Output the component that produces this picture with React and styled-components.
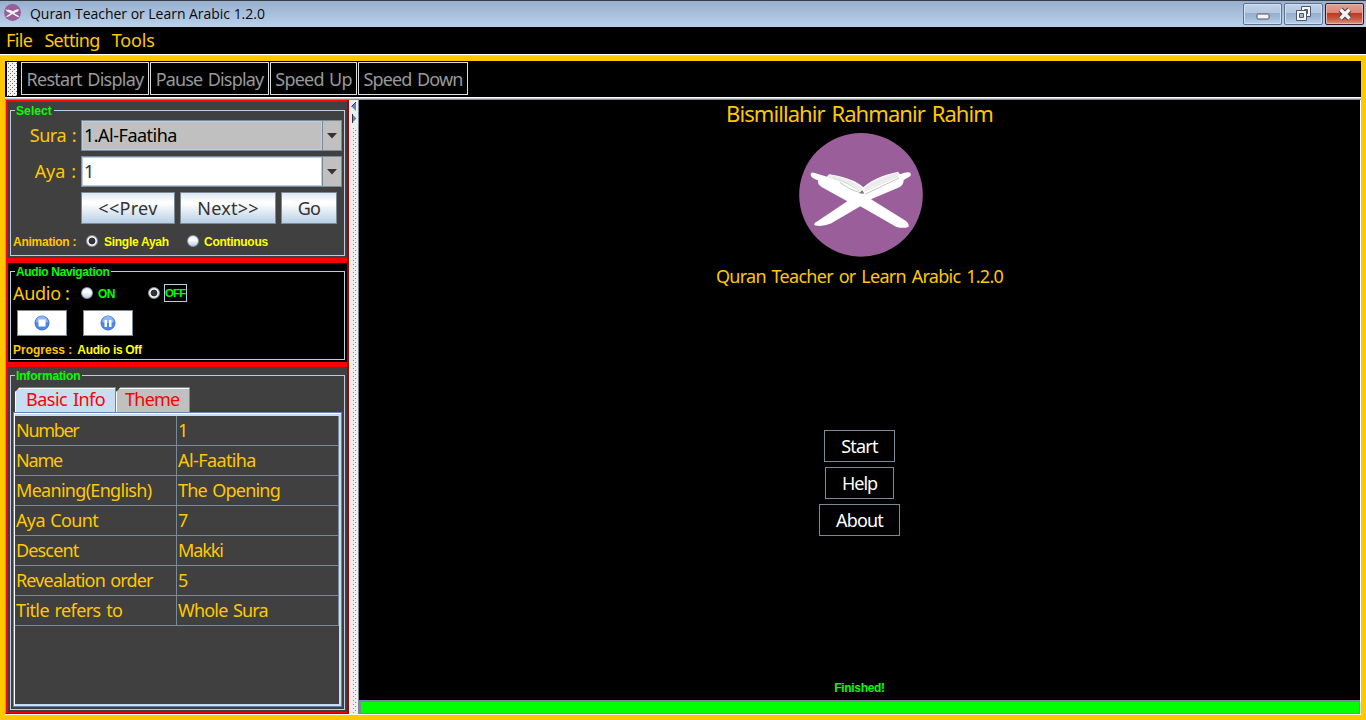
import React from "react";
import styled, { createGlobalStyle, css } from "styled-components";

const GlobalStyle = createGlobalStyle`
  * { box-sizing: border-box; }
  body { margin: 0; background: #000; overflow: hidden; }
  button { margin: 0; padding: 0; cursor: default; }
`;

const ui = css`
  font-family: "Noto Sans", "DejaVu Sans", sans-serif;
  font-size: 18px;
  line-height: 22px;
`;
const small = css`
  font-family: "Liberation Sans", Arial, sans-serif;
  font-size: 12px;
  font-weight: bold;
  line-height: 14px;
`;
const gold = "#ffc800";
const steel = "#7a8a99";
const pale = "#b8cfe5";

const Window = styled.div`
  ${ui}
  width: 1366px;
  height: 720px;
  display: flex;
  flex-direction: column;
  background: #000;
  color: ${gold};
  white-space: nowrap;
`;
const Text = styled.span`
  letter-spacing: ${(p) => p.$ls || 0}px;
  word-spacing: ${(p) => p.$ws || 0}px;
`;

const TitleBar = styled.header`
  height: 27px;
  flex: none;
  display: flex;
  align-items: center;
  padding: 0 2px 0 4px;
  border-top: 1px solid #3a3f47;
  background: linear-gradient(#97b0cf, #bad1ea);
  color: #0a0a0a;
  font-family: "Open Sans", "Noto Sans", sans-serif;
  font-size: 14px;
  line-height: 20px;
`;
const TitleIcon = styled.span`
  margin-top: -3px;
`;
const Caption = styled.span`
  margin: 0 auto 0 9px;
  letter-spacing: ${(p) => p.$ls}px;
`;
const WinButton = styled.button`
  width: 39px;
  height: 22px;
  margin: -1px 0 0 2px;
  display: flex;
  align-items: center;
  justify-content: center;
  border: 1px solid ${(p) => (p.$close ? "#431422" : "#5f7391")};
  border-radius: 2px;
  box-shadow: inset 0 0 0 1px ${(p) => (p.$close ? "#e9b3a8" : "#cfdff1")};
  background: ${(p) =>
    p.$close
      ? "linear-gradient(#e5a095 0%, #d98577 46%, #b93a22 47%, #c4543a 70%, #dd9080 100%)"
      : "linear-gradient(#c0d2e8 0%, #b3c8e1 46%, #96afcd 47%, #a0b9d6 70%, #bcd2ea 100%)"};
`;
const MinimizeGlyph = styled.svg`
  margin-top: 5px;
`;

const MenuBar = styled.nav`
  height: 29px;
  flex: none;
  display: flex;
  align-items: center;
  gap: 12px;
  padding: 0 0 2px 6px;
  border-bottom: 1px solid #ccc;
  box-shadow: inset 0 -1px #fff;
`;

const Frame = styled.main`
  flex: 1;
  min-height: 0;
  display: flex;
  flex-direction: column;
  border: 5px solid ${gold};
`;
const ToolBar = styled.div`
  height: 36px;
  flex: none;
  display: flex;
  gap: 1px;
  padding: 1px 0 0 2px;
`;
const Grip = styled.div`
  width: 10px;
  height: 34px;
  margin-right: 3px;
  background-color: #f1f1f1;
  background-image: conic-gradient(from 0deg at 1px 1px, transparent 75%, #777 0),
    conic-gradient(from 0deg at 1px 1px, transparent 75%, #777 0);
  background-size: 4px 4px;
  background-position: 1px 1px, 3px 3px;
`;
const ToolButton = styled.button`
  ${ui}
  width: ${(p) => p.$w}px;
  height: 33px;
  border: 1px solid #ddd;
  background: #000;
  color: #999;
`;

const Split = styled.div`
  flex: 1;
  min-height: 0;
  display: flex;
  border-top: 1px solid #fff;
  border-bottom: 1px solid #fff;
  box-shadow: inset 0 1px #ccc, inset 0 2px ${steel};
  padding-top: 2px;
`;
const Side = styled.aside`
  width: 344px;
  flex: none;
  display: flex;
  flex-direction: column;
  gap: 5px;
  padding: 2px 0 1px 2px;
  background: #f00;
  border-left: 1px solid #99a;
  border-right: 2px solid #a80000;
  border-bottom: 1px solid #a80000;
`;
const Panel = styled.section`
  height: ${(p) => p.$h}px;
  flex: ${(p) => (p.$h ? "none" : 1)};
  min-height: 0;
  padding: ${(p) => p.$pt || 0}px 2px 2px;
  background: ${(p) => p.$bg};
  display: flex;
`;
const Group = styled.fieldset`
  flex: 1;
  min-width: 0;
  min-height: 0;
  margin: 0;
  padding: 0 2px 2px;
  border: 1px solid ${pale};
  display: flex;
  flex-direction: column;
`;
const Legend = styled.legend`
  ${small}
  height: 14px;
  line-height: ${(p) => p.$lh || 14}px;
  margin-left: 2px;
  padding: 0 2px 0 1px;
  color: #0f0;
  letter-spacing: ${(p) => p.$ls || 0}px;
`;
const Row = styled.div`
  display: flex;
  align-items: center;
  height: ${(p) => p.$h}px;
  margin-top: ${(p) => p.$mt || 0}px;
  padding-left: ${(p) => p.$pl || 0}px;
  gap: ${(p) => p.$gap || 0}px;
`;
const FieldLabel = styled.span`
  width: 63px;
  margin-right: 5px;
  padding-bottom: 1px;
  text-align: right;
`;
const Combo = styled.div`
  width: 261px;
  height: 31px;
  display: flex;
  border: 1px solid ${steel};
  background: #c0c0c0;
`;
const ComboValue = styled.div`
  flex: 1;
  padding: 2px 0 0 1px;
  border: 1px solid ${pale};
  background: ${(p) => (p.$editable ? "#fff" : "#c0c0c0")};
  color: ${(p) => (p.$editable ? "#333" : "#000")};
`;
const ComboArrow = styled.div`
  width: 19px;
  display: flex;
  align-items: center;
  justify-content: center;
  border-left: 1px solid ${steel};
`;
const PushButton = styled.button`
  ${ui}
  width: ${(p) => p.$w}px;
  height: 32px;
  border: 1px solid ${steel};
  background: linear-gradient(#dde8f3 0%, #fff 30%, #fff 34%, #b8cfe5 100%);
  color: #333;
`;
const Small = styled.span`
  ${small}
  width: ${(p) => (p.$w ? p.$w + "px" : "auto")};
  color: ${(p) => p.$c};
  margin-left: ${(p) => p.$ml || 0}px;
  padding-top: ${(p) => p.$pt || 0}px;
  letter-spacing: ${(p) => p.$ls || 0}px;
`;
const AudioLabel = styled.span`
  width: 56px;
  letter-spacing: -0.3px;
`;
const Dot = styled.span`
  width: 12px;
  height: 12px;
  flex: none;
  margin-left: ${(p) => p.$ml}px;
  border-radius: 50%;
  border: 1px solid #8495a5;
  background: ${(p) =>
    p.$on
      ? "radial-gradient(circle, #333 0 3px, #fff 3.8px, #cbdcec 6px)"
      : "linear-gradient(#e8f0f8, #fff 40%, #b8cfe5)"};
`;
const FocusLabel = styled(Small)`
  margin-left: 4px;
  height: 18px;
  line-height: 17px;
  font-size: 11.5px;
  border: 1px solid ${pale};
`;
const MediaButton = styled.button`
  width: 50px;
  height: 26px;
  display: flex;
  align-items: center;
  justify-content: center;
  border: 1px solid ${steel};
  background: #fff;
`;

const Tabs = styled.div`
  display: flex;
  height: 25px;
  flex: none;
  margin: 5px 0 0 2px;
`;
const Tab = styled.div`
  width: ${(p) => p.$w}px;
  padding-left: ${(p) => p.$pl}px;
  color: #f00;
  border-top: 1px solid ${(p) => (p.$active ? "#6382bf" : steel)};
  border-right: 1px solid ${(p) => (p.$active ? "#6382bf" : steel)};
  box-shadow: inset 1px 1px #fff;
  background: ${(p) => (p.$active ? "#c8ddf2" : "#c0c0c0")};
  clip-path: polygon(5px 0, 100% 0, 100% 100%, 0 100%, 0 5px);
`;
const Pane = styled.div`
  flex: 1;
  min-height: 0;
  border: 1px solid #6382bf;
  background: #c8ddf2;
  box-shadow: inset 1px 1px #fff;
  padding: 3px 2px 2px 1px;
`;
const TableArea = styled.div`
  height: 100%;
  background: #404040;
`;
const Table = styled.div`
  display: grid;
  grid-template-columns: 162px 162px;
  grid-auto-rows: 30px;
`;
const Cell = styled.div`
  border-right: 1px solid ${steel};
  border-bottom: 1px solid ${steel};
  padding: 3px 0 0 1px;
`;

const Divider = styled.div`
  width: 10px;
  flex: none;
  display: flex;
  flex-direction: column;
  padding-left: 1px;
  background: #eee;
  border-left: 1px solid #fff;
  border-right: 1px solid ${steel};
`;
const Bumps = styled.div`
  flex: 1;
  margin: 0 0 0 2px;
  width: 4px;
  background: conic-gradient(from 0deg at 1px 1px, transparent 75%, #888 0) 0 0 / 4px 4px,
    conic-gradient(from 0deg at 1px 1px, transparent 75%, #888 0) 2px 2px / 4px 4px;
`;

const Stage = styled.div`
  flex: 1;
  display: flex;
  flex-direction: column;
  align-items: center;
  border-right: 1px solid #fff;
`;
const Heading = styled.h1`
  margin: 0;
  height: 33px;
  font-weight: normal;
  font-size: 22px;
  line-height: 27px;
`;
const LogoBox = styled.div`
  height: 124px;
  margin-left: 3px;
`;
const Product = styled.div`
  margin-top: 8px;
  height: 22px;
`;
const Actions = styled.div`
  margin-top: 143px;
  display: flex;
  flex-direction: column;
  align-items: center;
  gap: 5px;
`;
const ActionButton = styled.button`
  ${ui}
  width: ${(p) => p.$w}px;
  height: 32px;
  border: 1px solid ${steel};
  background: #000;
  color: #fff;
`;
const Status = styled.div`
  margin-top: auto;
  margin-bottom: 4px;
`;
const Progress = styled.div`
  width: 100%;
  height: 14px;
  flex: none;
  background: #0f0;
  border: 1px solid ${steel};
  border-width: 2px 1px 1px 2px;
`;

function Logo({ size }) {
  return (
    <svg width={size} height={size} viewBox="297 113 372 372" style={{ display: "block" }}>
      <circle cx="483" cy="298.5" r="185.5" fill="#9a5f9b" />
      <path
        fill="#fff"
        d="M332 235Q336 229 344 233L381 244Q386 234 396 238Q465 250 490 276Q520 246 594 229L600 237Q622 228 631 232Q636 240 625 246L611 254Q611 270 598 276L513 312L618 377Q628 386 626 394Q610 401 588 394L481 333L394 384Q366 396 344 390Q340 384 350 379L442 318L366 276Q352 268 354 255Q330 247 332 235Z"
      />
      <path
        fill="#ececec"
        d="M386 238Q450 246 486 278L484 289Q440 262 381 246ZM594 231Q530 248 493 278L493 287Q540 262 597 242Z"
      />
      <path fill="none" stroke="#a5a5a5" strokeWidth="2" d="M420 262Q450 284 484 294M497 296L597 248" />
      <path fill="none" stroke="#c8c8c8" strokeWidth="1.5" d="M400 250Q440 257 478 288M494 288L594 243" />
      <path d="M478 294L487 284L493 295Z" fill="#777" />
    </svg>
  );
}

function Arrow() {
  return (
    <svg width="10" height="6" viewBox="0 0 10 6">
      <path d="M0 0H10L5 5.5Z" fill="#333" />
    </svg>
  );
}

function Media({ pause }) {
  return (
    <svg width="16" height="16" viewBox="0 0 16 16">
      <circle cx="8" cy="8" r="7" fill="#4d86ec" stroke="#3f70cc" />
      <path d="M2 7A6 6 0 0 1 14 7Q8 9 2 7Z" fill="#8db5fa" />
      {pause ? (
        <path d="M4.5 5H7V12H4.5ZM9 5H11.5V12H9Z" fill="#fff" />
      ) : (
        <path d="M4.5 4.5H11.5V11.5H4.5Z" fill="#fff" />
      )}
    </svg>
  );
}

const tools = [
  ["Restart Display", 128, -0.75, 1.5],
  ["Pause Display", 119, -0.83, 1.5],
  ["Speed Up", 87, -0.8, 1.5],
  ["Speed Down", 110, -0.85, 1.5],
];
const facts = [
  ["Number", -1.3, "1", 0],
  ["Name", -1.2, "Al-Faatiha", -0.6],
  ["Meaning(English)", -0.7, "The Opening", -0.8],
  ["Aya Count", -0.65, "7", 0],
  ["Descent", -0.85, "Makki", -1.1],
  ["Revealation order", -0.85, "5", 0],
  ["Title refers to", -0.6, "Whole Sura", -0.8],
];

export default function App() {
  return (
    <Window>
      <GlobalStyle />
      <TitleBar>
        <TitleIcon><Logo size={17} /></TitleIcon>
        <Caption $ls={-0.03}>Quran Teacher or Learn Arabic 1.2.0</Caption>
        <WinButton>
          <MinimizeGlyph width="14" height="7" viewBox="0 0 14 7">
            <rect x="1" y="1" width="12" height="5" rx="1" fill="#f5f5f5" stroke="#50596a" />
          </MinimizeGlyph>
        </WinButton>
        <WinButton>
          <svg width="16" height="16" viewBox="0 0 16 16">
            <path d="M5.5 0.5H14.5V10.5H5.5ZM8.5 3.5V7.5H11.5V3.5Z" fill="#f5f5f5" stroke="#50596a" fillRule="evenodd" />
            <path d="M0.5 4.5H10.5V14.5H0.5Z" fill="#f5f5f5" stroke="#50596a" />
            <path d="M3.5 7.5H7.5V11.5H3.5Z" fill="#9fb7d4" stroke="#50596a" />
          </svg>
        </WinButton>
        <WinButton $close>
          <svg width="16" height="14" viewBox="0 0 16 14">
            <path d="M3.5 2.5L12.5 11.5M12.5 2.5L3.5 11.5" stroke="#50424c" strokeWidth="5.5" />
            <path d="M3.5 2.5L12.5 11.5M12.5 2.5L3.5 11.5" stroke="#f4f4f4" strokeWidth="3.4" />
          </svg>
        </WinButton>
      </TitleBar>
      <MenuBar>
        <Text $ls={-0.6}>File</Text>
        <Text $ls={-0.65}>Setting</Text>
        <Text $ls={-0.15}>Tools</Text>
      </MenuBar>
      <Frame>
        <ToolBar>
          <Grip />
          {tools.map(([t, w, ls, ws]) => (
            <ToolButton key={t} $w={w}>
              <Text $ls={ls} $ws={ws}>{t}</Text>
            </ToolButton>
          ))}
        </ToolBar>
        <Split>
          <Side>
            <Panel $h={156} $bg="#404040" $pt={1}>
              <Group>
                <Legend $ls={0.1} $lh={16}>Select</Legend>
                <Row $h={31} $mt={3}>
                  <FieldLabel><Text $ls={-0.5} $ws={1.5}>Sura :</Text></FieldLabel>
                  <Combo>
                    <ComboValue><Text $ls={-0.5}>1.Al-Faatiha</Text></ComboValue>
                    <ComboArrow><Arrow /></ComboArrow>
                  </Combo>
                </Row>
                <Row $h={31} $mt={5}>
                  <FieldLabel><Text $ls={-0.1} $ws={1.5}>Aya :</Text></FieldLabel>
                  <Combo>
                    <ComboValue $editable><Text>1</Text></ComboValue>
                    <ComboArrow><Arrow /></ComboArrow>
                  </Combo>
                </Row>
                <Row $h={32} $mt={5} $pl={68} $gap={5}>
                  <PushButton $w={94}><Text $ls={0.3}>&lt;&lt;Prev</Text></PushButton>
                  <PushButton $w={96}><Text $ls={0.2}>Next&gt;&gt;</Text></PushButton>
                  <PushButton $w={56}><Text $ls={-0.7}>Go</Text></PushButton>
                </Row>
                <Row $h={12} $mt={11}>
                  <Small $c={gold} $w={63} $pt={2} $ls={-0.25}>Animation :</Small>
                  <Dot $ml={10} $on />
                  <Small $c="#ff0" $ml={6} $pt={2} $w={65} $ls={-0.28}>Single Ayah</Small>
                  <Dot $ml={18} />
                  <Small $c="#ff0" $ml={5} $pt={2} $ls={-0.28}>Continuous</Small>
                </Row>
              </Group>
            </Panel>
            <Panel $h={99} $bg="#000" $pt={1}>
              <Group>
                <Legend $ls={-0.33} $lh={16}>Audio Navigation</Legend>
                <Row $h={22} $mt={4}>
                  <AudioLabel>Audio :</AudioLabel>
                  <Dot $ml={12} />
                  <Small $c="#0f0" $ml={5} $pt={1} $w={17} $ls={-0.7}>ON</Small>
                  <Dot $ml={33} $on />
                  <FocusLabel $c="#0f0" $w={23} $ls={-0.9}>OFF</FocusLabel>
                </Row>
                <Row $h={26} $mt={6} $pl={4} $gap={16}>
                  <MediaButton><Media /></MediaButton>
                  <MediaButton><Media pause /></MediaButton>
                </Row>
                <Row $h={14} $mt={7}>
                  <Small $c={gold}>Progress :</Small>
                  <Small $c="#ff0" $ml={5} $ls={-0.3}>Audio is Off</Small>
                </Row>
              </Group>
            </Panel>
            <Panel $bg="#404040" $pt={1}>
              <Group>
                <Legend $ls={-0.15} $lh={16}>Information</Legend>
                <Tabs>
                  <Tab $w={101} $pl={11} $active><Text $ls={-0.5} $ws={1.5}>Basic Info</Text></Tab>
                  <Tab $w={74} $pl={9}><Text $ls={-0.75}>Theme</Text></Tab>
                </Tabs>
                <Pane>
                  <TableArea>
                    <Table>
                      {facts.map(([k, kl, v, vl]) => (
                        <React.Fragment key={k}>
                          <Cell><Text $ls={kl} $ws={1.5}>{k}</Text></Cell>
                          <Cell><Text $ls={vl} $ws={1.5}>{v}</Text></Cell>
                        </React.Fragment>
                      ))}
                    </Table>
                  </TableArea>
                </Pane>
              </Group>
            </Panel>
          </Side>
          <Divider>
            <svg width="6" height="28" viewBox="0 0 6 28">
              <path d="M5 2V11L0.5 6.5Z" fill="#6382bf" />
              <path d="M1 14V23L5.5 18.5Z" fill="#6382bf" />
              <path d="M5 2L0.5 6.5M1.5 14V23" stroke="#333" fill="none" />
            </svg>
            <Bumps />
          </Divider>
          <Stage>
            <Heading><Text $ls={-0.93} $ws={2}>Bismillahir Rahmanir Rahim</Text></Heading>
            <LogoBox><Logo size={124} /></LogoBox>
            <Product><Text $ls={-0.72} $ws={1.8}>Quran Teacher or Learn Arabic 1.2.0</Text></Product>
            <Actions>
              <ActionButton $w={71}><Text $ls={-0.8}>Start</Text></ActionButton>
              <ActionButton $w={69}><Text $ls={-1}>Help</Text></ActionButton>
              <ActionButton $w={81}><Text $ls={-0.8}>About</Text></ActionButton>
            </Actions>
            <Status><Small $c="#0f0" $ls={-0.3}>Finished!</Small></Status>
            <Progress />
          </Stage>
        </Split>
      </Frame>
    </Window>
  );
}
